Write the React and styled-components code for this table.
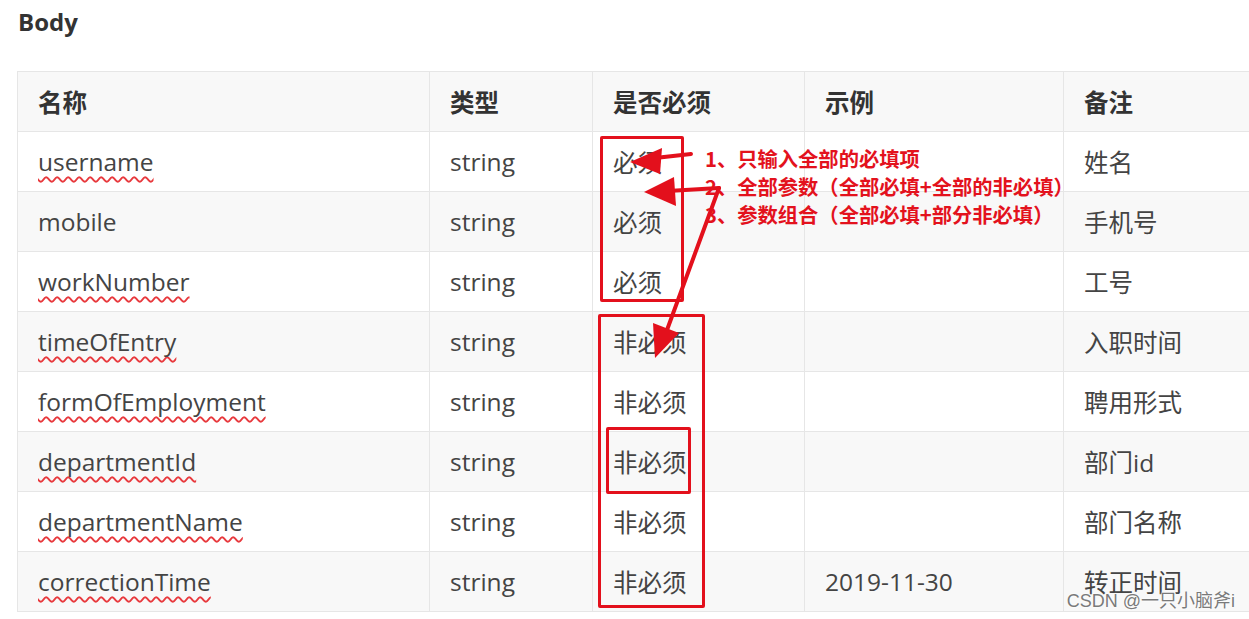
import React from 'react';
import styled, { createGlobalStyle } from 'styled-components';

const GlobalStyle = createGlobalStyle`
  html, body {
    margin: 0;
    padding: 0;
    background: #ffffff;
    overflow: hidden;
  }
  body {
    font-family: "Open Sans", "Noto Sans CJK SC", sans-serif;
    color: #3f3f3f;
  }
`;

const Page = styled.div`
  position: relative;
  width: 1249px;
  height: 619px;
  padding: 6px 0 0 17px;
  box-sizing: border-box;
  overflow: hidden;
`;

const Title = styled.h3`
  margin: 0;
  font-size: 24px;
  line-height: 32px;
  font-weight: 700;
  color: #333;
  padding-left: 1px;
`;

const Table = styled.table`
  margin-top: 33px;
  border-collapse: collapse;
  table-layout: fixed;
  width: 1296px;
  font-size: 24.5px;
`;

const Row = styled.tr`
  height: 60px;
  background: ${p => (p.$alt ? '#f8f8f8' : '#ffffff')};
`;

const HeadCell = styled.th`
  border: 1px solid #e6e6e6;
  padding: 0 20px;
  text-align: left;
  font-weight: 700;
  color: #333;
  vertical-align: middle;
`;

const Cell = styled.td`
  border: 1px solid #e6e6e6;
  padding: 0 20px;
  vertical-align: middle;
  white-space: nowrap;
  color: #444;
`;

const Field = styled.span`
  text-decoration: underline wavy #e8393d;
  text-decoration-thickness: 1.5px;
  text-underline-offset: 5px;
  text-decoration-skip-ink: none;
`;

const Overlay = styled.svg`
  position: absolute;
  left: 0;
  top: 0;
  pointer-events: none;
`;

const MarkBox = styled.div`
  position: absolute;
  left: ${p => p.$x}px;
  top: ${p => p.$y}px;
  width: ${p => p.$w}px;
  height: ${p => p.$h}px;
  border: 3px solid #e3101c;
  box-sizing: border-box;
  border-radius: 2px;
`;

const Notes = styled.div`
  position: absolute;
  left: 705px;
  top: 144px;
  display: flex;
  flex-direction: column;
  font-family: "Noto Sans CJK SC", sans-serif;
  font-size: 20.3px;
  line-height: 28px;
  font-weight: 700;
  color: #e3121d;
  white-space: nowrap;
`;

const Watermark = styled.div`
  position: absolute;
  right: 14px;
  bottom: 7px;
  font-family: "Liberation Sans", "Noto Sans CJK SC", sans-serif;
  font-size: 18px;
  color: #7a7a7a;
  text-shadow: 0 0 2px #fff, 0 0 2px #fff;
`;

const rows = [
  ['username', 'string', '必须', '', '姓名'],
  ['mobile', 'string', '必须', '', '手机号'],
  ['workNumber', 'string', '必须', '', '工号'],
  ['timeOfEntry', 'string', '非必须', '', '入职时间'],
  ['formOfEmployment', 'string', '非必须', '', '聘用形式'],
  ['departmentId', 'string', '非必须', '', '部门id'],
  ['departmentName', 'string', '非必须', '', '部门名称'],
  ['correctionTime', 'string', '非必须', '2019-11-30', '转正时间'],
];

const spellFlag = ['username', 'workNumber', 'timeOfEntry', 'formOfEmployment', 'departmentId', 'departmentName', 'correctionTime'];

const RED = '#e3101c';

const App = () => (
  <>
    <GlobalStyle />
    <Page>
      <Title>Body</Title>
      <Table>
        <colgroup>
          <col style={{ width: 412 }} />
          <col style={{ width: 163 }} />
          <col style={{ width: 212 }} />
          <col style={{ width: 259 }} />
          <col style={{ width: 250 }} />
        </colgroup>
        <thead>
          <Row $alt>
            <HeadCell>名称</HeadCell>
            <HeadCell>类型</HeadCell>
            <HeadCell>是否必须</HeadCell>
            <HeadCell>示例</HeadCell>
            <HeadCell>备注</HeadCell>
          </Row>
        </thead>
        <tbody>
          {rows.map((r, i) => (
            <Row key={r[0]} $alt={i % 2 === 1}>
              <Cell>{spellFlag.includes(r[0]) ? <Field>{r[0]}</Field> : r[0]}</Cell>
              <Cell>{r[1]}</Cell>
              <Cell>{r[2]}</Cell>
              <Cell>{r[3]}</Cell>
              <Cell>{r[4]}</Cell>
            </Row>
          ))}
        </tbody>
      </Table>

      <MarkBox $x={600} $y={136} $w={84} $h={166} />
      <MarkBox $x={598} $y={314} $w={107} $h={294} />
      <MarkBox $x={606} $y={427} $w={85} $h={67} />

      <Overlay width="1249" height="619" viewBox="0 0 1249 619">
        <g stroke={RED} strokeWidth="4" strokeLinecap="round" fill="none">
          <line x1="691" y1="154" x2="655" y2="158" />
          <line x1="719" y1="188" x2="668" y2="191" />
          <line x1="719" y1="188" x2="667" y2="330" />
        </g>
        <g fill={RED}>
          <polygon points="630,162 662,148 660,174" />
          <polygon points="644,192 674,177 676,206" />
          <polygon points="655,358 653,323 679,333" />
        </g>
      </Overlay>

      <Notes>
        <span>1、只输入全部的必填项</span>
        <span>2、全部参数（全部必填+全部的非必填）</span>
        <span>3、参数组合（全部必填+部分非必填）</span>
      </Notes>

      <Watermark>CSDN @一只小脑斧i</Watermark>
    </Page>
  </>
);

export default App;
